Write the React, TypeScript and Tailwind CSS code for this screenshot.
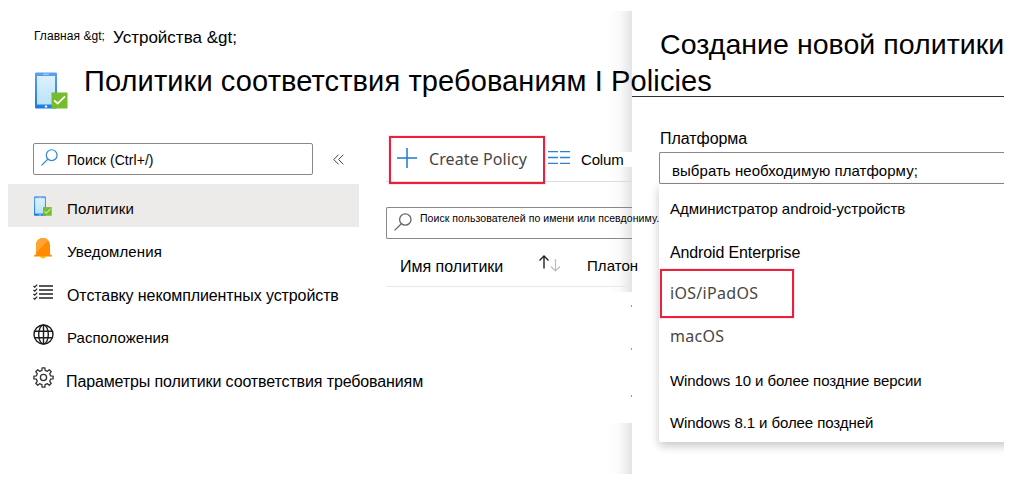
import type { ReactNode } from "react";

function DeviceIcon({ className }: { className: string }) {
  return (
    <svg className={className} viewBox="0 0 33 37" preserveAspectRatio="none">
      <defs>
        <linearGradient id="deviceBody" x1="0" y1="0" x2="0" y2="1">
          <stop offset="0" stopColor="#5ea0ef" />
          <stop offset="1" stopColor="#1b7cdb" />
        </linearGradient>
        <linearGradient id="deviceScreen" x1="0" y1="0" x2="0" y2="1">
          <stop offset="0" stopColor="#dcf2fd" />
          <stop offset="1" stopColor="#bbe1fb" />
        </linearGradient>
      </defs>
      <rect x="0" y="0.5" width="22" height="36" rx="1.2" fill="url(#deviceBody)" />
      <rect x="2" y="4" width="18" height="28.5" fill="url(#deviceScreen)" />
      <rect x="8" y="1.7" width="6" height="1" rx="0.5" fill="#b5dcf8" />
      <rect x="9.8" y="33.6" width="2.4" height="2" rx="0.4" fill="#fff" />
      <rect x="16.5" y="20.5" width="16" height="16" fill="#76bc2d" />
      <path d="M19.2 28.4 L22.6 31.6 L30 24.4" fill="none" stroke="#fff" strokeWidth="1.8" />
    </svg>
  );
}

function BellIcon() {
  return (
    <svg className="h-[21px] w-[18px]" viewBox="0 0 18 21">
      <path d="M6 17.5h6a3 3 0 0 1-6 0z" fill="#ffca00" />
      <path d="M0 18.500v-.9c1.300-.4 2-1.200 2-2.600V7.500C2 3 5 0 9 0s7 3 7 7.500V15c0 1.400.7 2.200 2 2.600v.9z" fill="#ff8c00" />
      <path d="M2 15V7.500C2 3 5 0 9 0c2.300 0 4 .8 5.300 2.400z" fill="#ffa333" />
    </svg>
  );
}

function ChecklistIcon() {
  return (
    <svg className="h-4 w-5" viewBox="0 0 20 16" fill="none" stroke="#222">
      <path d="M6 2h14M6 6h14M6 10h14M6 14h14" strokeWidth="1.300" />
      <path d="M.5 2l1.300 1.200L4.200.6M.5 6l1.300 1.200 2.400-2.600M.5 10l1.300 1.200 2.400-2.600M.5 14l1.300 1.200 2.400-2.600" strokeWidth="1.200" />
    </svg>
  );
}

function GlobeIcon() {
  return (
    <svg className="size-[21px]" viewBox="0 0 21 21" fill="none" stroke="#1c1c1c" strokeWidth="1.400">
      <circle cx="10.500" cy="10.500" r="9.500" />
      <ellipse cx="10.500" cy="10.500" rx="4.800" ry="9.500" />
      <path d="M10.500 1v19M2 7.200h17M2 13.800h17" />
    </svg>
  );
}

function GearIcon() {
  return (
    <svg className="size-[21px]" viewBox="0 0 21 21" fill="none" stroke="#333" strokeWidth="1.300" strokeLinejoin="round">
      <path d="M8.910 3.350 L9.100 0.900 L11.900 0.900 L12.090 3.350 L14.430 4.320 L16.300 2.720 L18.280 4.700 L16.680 6.570 L17.650 8.910 L20.100 9.100 L20.100 11.900 L17.650 12.090 L16.680 14.430 L18.280 16.300 L16.300 18.280 L14.430 16.680 L12.090 17.650 L11.900 20.100 L9.100 20.100 L8.910 17.650 L6.570 16.680 L4.700 18.280 L2.720 16.300 L4.320 14.430 L3.350 12.090 L0.900 11.900 L0.900 9.100 L3.350 8.910 L4.320 6.570 L2.720 4.700 L4.700 2.720 L6.570 4.320 Z" />
      <circle cx="10.500" cy="10.500" r="3.100" />
    </svg>
  );
}

function SearchIcon({ className }: { className: string }) {
  return (
    <svg className={className} viewBox="0 0 18 18" fill="none" stroke="currentColor" strokeWidth="1.300">
      <circle cx="11.300" cy="6.500" r="5.700" />
      <path d="M7.300 10.700L.6 17.400" />
    </svg>
  );
}

function NavItem({ icon, active, children }: { icon: ReactNode; active?: boolean; children: ReactNode }) {
  return (
    <li className={`flex h-[43px] items-center pl-[25px] ${active ? "bg-[#edebe9]" : ""}`}>
      <span className="flex w-[34px] shrink-0 items-center">{icon}</span>
      {children}
    </li>
  );
}

function Sidebar() {
  return (
    <nav className="relative z-10 w-[351px] shrink-0">
      <div className="flex items-center pl-[25px]">
        <div className="flex h-8 w-[280px] items-center rounded-[2px] border border-[#8a8886] pl-[7px]">
          <SearchIcon className="mb-1 h-[17px] w-[17px] text-[#2b88d8]" />
          <span className="ml-[9px] pt-[3px] text-[14px] tracking-[0.05px]">Поиск (Ctrl+/)</span>
        </div>
        <svg className="ml-5 h-[11px] w-[11px]" viewBox="0 0 11 11" fill="none" stroke="#444">
          <path d="M5.500.7L.8 5.500l4.700 4.800M10.300.7L5.600 5.500l4.700 4.800" />
        </svg>
      </div>
      <ul className="mt-[9px]">
        <NavItem active icon={<DeviceIcon className="ml-px h-5 w-[18px]" />}>
          <span className="pt-[7px] text-[15px] tracking-[0.100px]">Политики</span>
        </NavItem>
        <NavItem icon={<span className="ml-px"><BellIcon /></span>}>
          <span className="pt-2 text-[15px] tracking-[0.100px]">Уведомления</span>
        </NavItem>
        <NavItem icon={<ChecklistIcon />}>
          <span className="pt-[9px] text-[16px] tracking-[-0.100px]">Отставку некомплиентных устройств</span>
        </NavItem>
        <NavItem icon={<GlobeIcon />}>
          <span className="pt-2 text-[15px] tracking-[0.020px]">Расположения</span>
        </NavItem>
        <NavItem icon={<GearIcon />}>
          <span className="-ml-px pt-[9px] text-[16px] tracking-[-0.120px]">Параметры политики соответствия требованиям</span>
        </NavItem>
      </ul>
    </nav>
  );
}

function PolicyList() {
  return (
    <section className="ml-[27px] w-[246px] shrink-0">
      <div className="-mt-[7px] flex h-[46px] items-center border-b border-[#dcdcdc]">
        <div className="-mb-[3px] ml-[3px] mr-[3px] flex h-12 w-[156px] shrink-0 items-center border-2 border-[#ee1f3b] pb-[5px] pl-[6px] shadow-[0_0_1px_rgba(238,31,59,0.6)]">
          <svg className="h-5 w-5" viewBox="0 0 20 20" stroke="#1b7cd0" strokeWidth="1.500">
            <path d="M10 0v20M0 10h20" />
          </svg>
          <span className="ml-3 pt-[2px] font-['Noto_Sans',sans-serif] text-[16px] leading-5 tracking-[0.100px] text-[#484644]">Create Policy</span>
        </div>
        <svg className="mb-[2px] h-[13px] w-[22px] shrink-0" viewBox="0 0 22 13" stroke="#2b83d3" strokeWidth="1.300">
          <path d="M0 .5h10M12 .5h10M0 6.500h10M12 6.500h10M0 12.500h10M12 12.500h10" />
        </svg>
        <div className="ml-[11px] mt-[2px] flex h-[15px] w-[53px] shrink-0 items-center bg-white pt-[2px] text-[15px] tracking-[-0.150px]">Colum</div>
      </div>
      <div className="mt-[25px] flex h-8 items-center rounded-l-[2px] border border-r-0 border-[#8a8886] pl-[7px]">
        <SearchIcon className="mb-[3px] h-[18px] w-[18px] shrink-0 text-[#666]" />
        <span className="mb-[9px] ml-2 text-[10.5px] tracking-[0.060px]">Поиск пользователей по имени или псевдониму.</span>
      </div>
      <div className="flex h-[48px] items-center border-b border-[#e8e8e8] pl-[14px] pt-2">
        <span className="w-[139px] shrink-0 pt-[1px] text-[16px]">Имя политики</span>
        <svg className="mb-1.5 h-[17px] w-[22px] shrink-0" viewBox="0 0 22 17" fill="none">
          <path d="M5 13.500V1M.5 5.500L5 1l4.500 4.500" stroke="#222" strokeWidth="1.400" />
          <path d="M16.500 4v12M12 11.500l4.500 4.500 4.500-4.500" stroke="#bcbcbc" strokeWidth="1.200" />
        </svg>
        <span className="ml-[26px] text-[15px] tracking-[0.050px]">Платон</span>
      </div>
      <div className="mt-[5px] flex h-[131px] items-stretch justify-end bg-white">
        <div className="mt-[13px] flex w-px flex-col gap-[41px]">
          <i className="h-[2px] bg-[#999]" />
          <i className="h-[2px] bg-[#999]" />
          <i className="mt-1 h-[2px] bg-[#999]" />
        </div>
      </div>
    </section>
  );
}

function CreatePanel() {
  return (
    <aside className="relative mt-[11px] flex h-[463px] w-[372px] shrink-0 flex-col overflow-hidden whitespace-nowrap bg-white">
      <h2 className="flex h-[86px] items-center border-b border-[#323130] pb-[18px] pl-7 text-[28.5px] tracking-[0.050px]">Создание новой политики</h2>
      <div className="pl-[27px]">
        <label className="flex h-[55px] items-end pb-[3px] pl-px text-[16px] leading-5 tracking-[-0.050px]">Платформа</label>
        <div className="flex h-8 items-center rounded-l-[2px] border border-r-0 border-[#8a8886] pl-3 pt-[6px] text-[15px] tracking-[0.050px]">
          выбрать необходимую платформу;
        </div>
        <ul className="flex h-[258px] w-[380px] flex-col rounded-b-[2px] pl-[11px] shadow-[0_4px_10px_rgba(0,0,0,0.22)]">
          <li className="flex h-[49px] items-center pt-[2px] text-[15px] tracking-[-0.040px]">Администратор android-устройств</li>
          <li className="flex h-[36px] items-center pt-1 text-[16px] tracking-[-0.130px]">Android Enterprise</li>
          <li className="-ml-[10px] flex h-[49px] w-[134px] items-center border-2 border-[#ee1f3b] pb-px pl-2 font-['Noto_Sans',sans-serif] text-[16px] tracking-[0.300px] text-[#484644] shadow-[0_0_1px_rgba(238,31,59,0.6)]">iOS/iPadOS</li>
          <li className="flex h-[38px] items-center pb-[3px] font-['Noto_Sans',sans-serif] text-[16px] tracking-[0.300px] text-[#484644]">macOS</li>
          <li className="flex h-[50px] items-center text-[15px] tracking-[-0.080px]">Windows 10 и более поздние версии</li>
          <li className="flex h-[34px] items-center text-[15px] tracking-[-0.080px]">Windows 8.1 и более поздней</li>
        </ul>
      </div>
    </aside>
  );
}

export default function App() {
  return (
    <div className="flex h-[480px] w-[1028px] overflow-hidden bg-white font-['Liberation_Sans',Arial,sans-serif] text-black">
      <main className="relative z-10 w-[632px] shrink-0 whitespace-nowrap">
        <div className="absolute right-0 top-[11px] -z-10 h-[463px] w-6 bg-linear-to-r from-transparent via-black/[0.02] to-black/[0.11]" />
        <div className="flex h-[60px] items-start pl-[34px]">
          <span className="w-[79px] pt-[28px] text-[12px] leading-4 tracking-[0.050px]">Главная &amp;gt;</span>
          <span className="pt-[28px] text-[17px] leading-5">Устройства &amp;gt;</span>
        </div>
        <header className="flex h-[83px] items-start pl-[35px]">
          <DeviceIcon className="mt-3 h-[37px] w-[33px] shrink-0" />
          <h1 className="ml-4 pt-1 text-[29px] leading-[34px] tracking-[0.110px]">Политики соответствия требованиям I Policies</h1>
        </header>
        <div className="flex items-start pl-2">
          <Sidebar />
          <PolicyList />
        </div>
      </main>
      <CreatePanel />
    </div>
  );
}
